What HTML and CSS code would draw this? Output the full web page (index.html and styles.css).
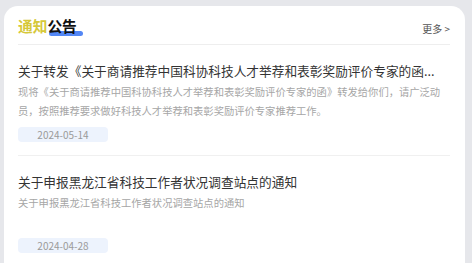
FILE: index.html
```html
<!DOCTYPE html>
<html lang="zh-CN">
<head>
<meta charset="utf-8">
<link rel="stylesheet" href="styles.css">
</head>
<body>
<div class="card">
  <div class="head">
    <div class="head-title"><span class="t1">通知</span><span class="t2">公告</span></div>
    <div class="more">更多 &gt;</div>
  </div>
  <div class="item">
    <div class="title">关于转发《关于商请推荐中国科协科技人才举荐和表彰奖励评价专家的函...</div>
    <div class="desc">现将《关于商请推荐中国科协科技人才举荐和表彰奖励评价专家的函》转发给你们，请广泛动员，按照推荐要求做好科技人才举荐和表彰奖励评价专家推荐工作。</div>
    <div class="date">2024-05-14</div>
  </div>
  <div class="item last">
    <div class="title">关于申报黑龙江省科技工作者状况调查站点的通知</div>
    <div class="desc">关于申报黑龙江省科技工作者状况调查站点的通知</div>
    <div class="date">2024-04-28</div>
  </div>
</div>
</body>
</html>
```
FILE: styles.css
```css
html, body {
  margin: 0;
  padding: 0;
}
body {
  background: #e6e7eb;
  font-family: "Noto Sans CJK SC", "Noto Sans", sans-serif;
  padding: 6px 7px 0 4px;
  height: 263px;
  box-sizing: border-box;
  overflow: hidden;
}
.card {
  position: relative;
  z-index: 0;
  background: #fff;
  border-radius: 14px 14px 0 0;
  padding: 0 15px 0 14px;
  height: 257px;
  box-sizing: border-box;
  overflow: hidden;
}
.head {
  display: flex;
  justify-content: space-between;
  align-items: center;
  padding: 10px 0 8px;
  border-bottom: 1px solid #eeeeee;
}
.head-title {
  font-size: 14.7px;
  font-weight: 700;
  line-height: 18px;
}
.t1 {
  color: #d6c83a;
}
.t2 {
  color: #111;
  position: relative;
}
.t2::after {
  content: "";
  position: absolute;
  left: 2px;
  bottom: 0;
  width: 34px;
  height: 5px;
  border-radius: 3px;
  background: #5387f5;
  z-index: -1;
}
.more {
  font-size: 10px;
  color: #555;
  line-height: 14px;
  margin-top: 6px;
}
.item {
  padding: 17px 0 13px;
  border-bottom: 1px solid #f0f0f0;
}
.item.last {
  padding-bottom: 0;
  border-bottom: 0;
}
.title {
  font-size: 12.7px;
  line-height: 18px;
  color: #333;
  white-space: nowrap;
  overflow: hidden;
}
.desc {
  margin-top: 2px;
  font-size: 10.3px;
  line-height: 19px;
  color: #a6a6a6;
  height: 38px;
}
.date {
  margin-top: 7px;
  width: 90px;
  height: 15px;
  line-height: 15px;
  border-radius: 4px;
  background: #edf3fd;
  color: #9a9a9a;
  font-size: 10px;
  text-align: center;
}
```
